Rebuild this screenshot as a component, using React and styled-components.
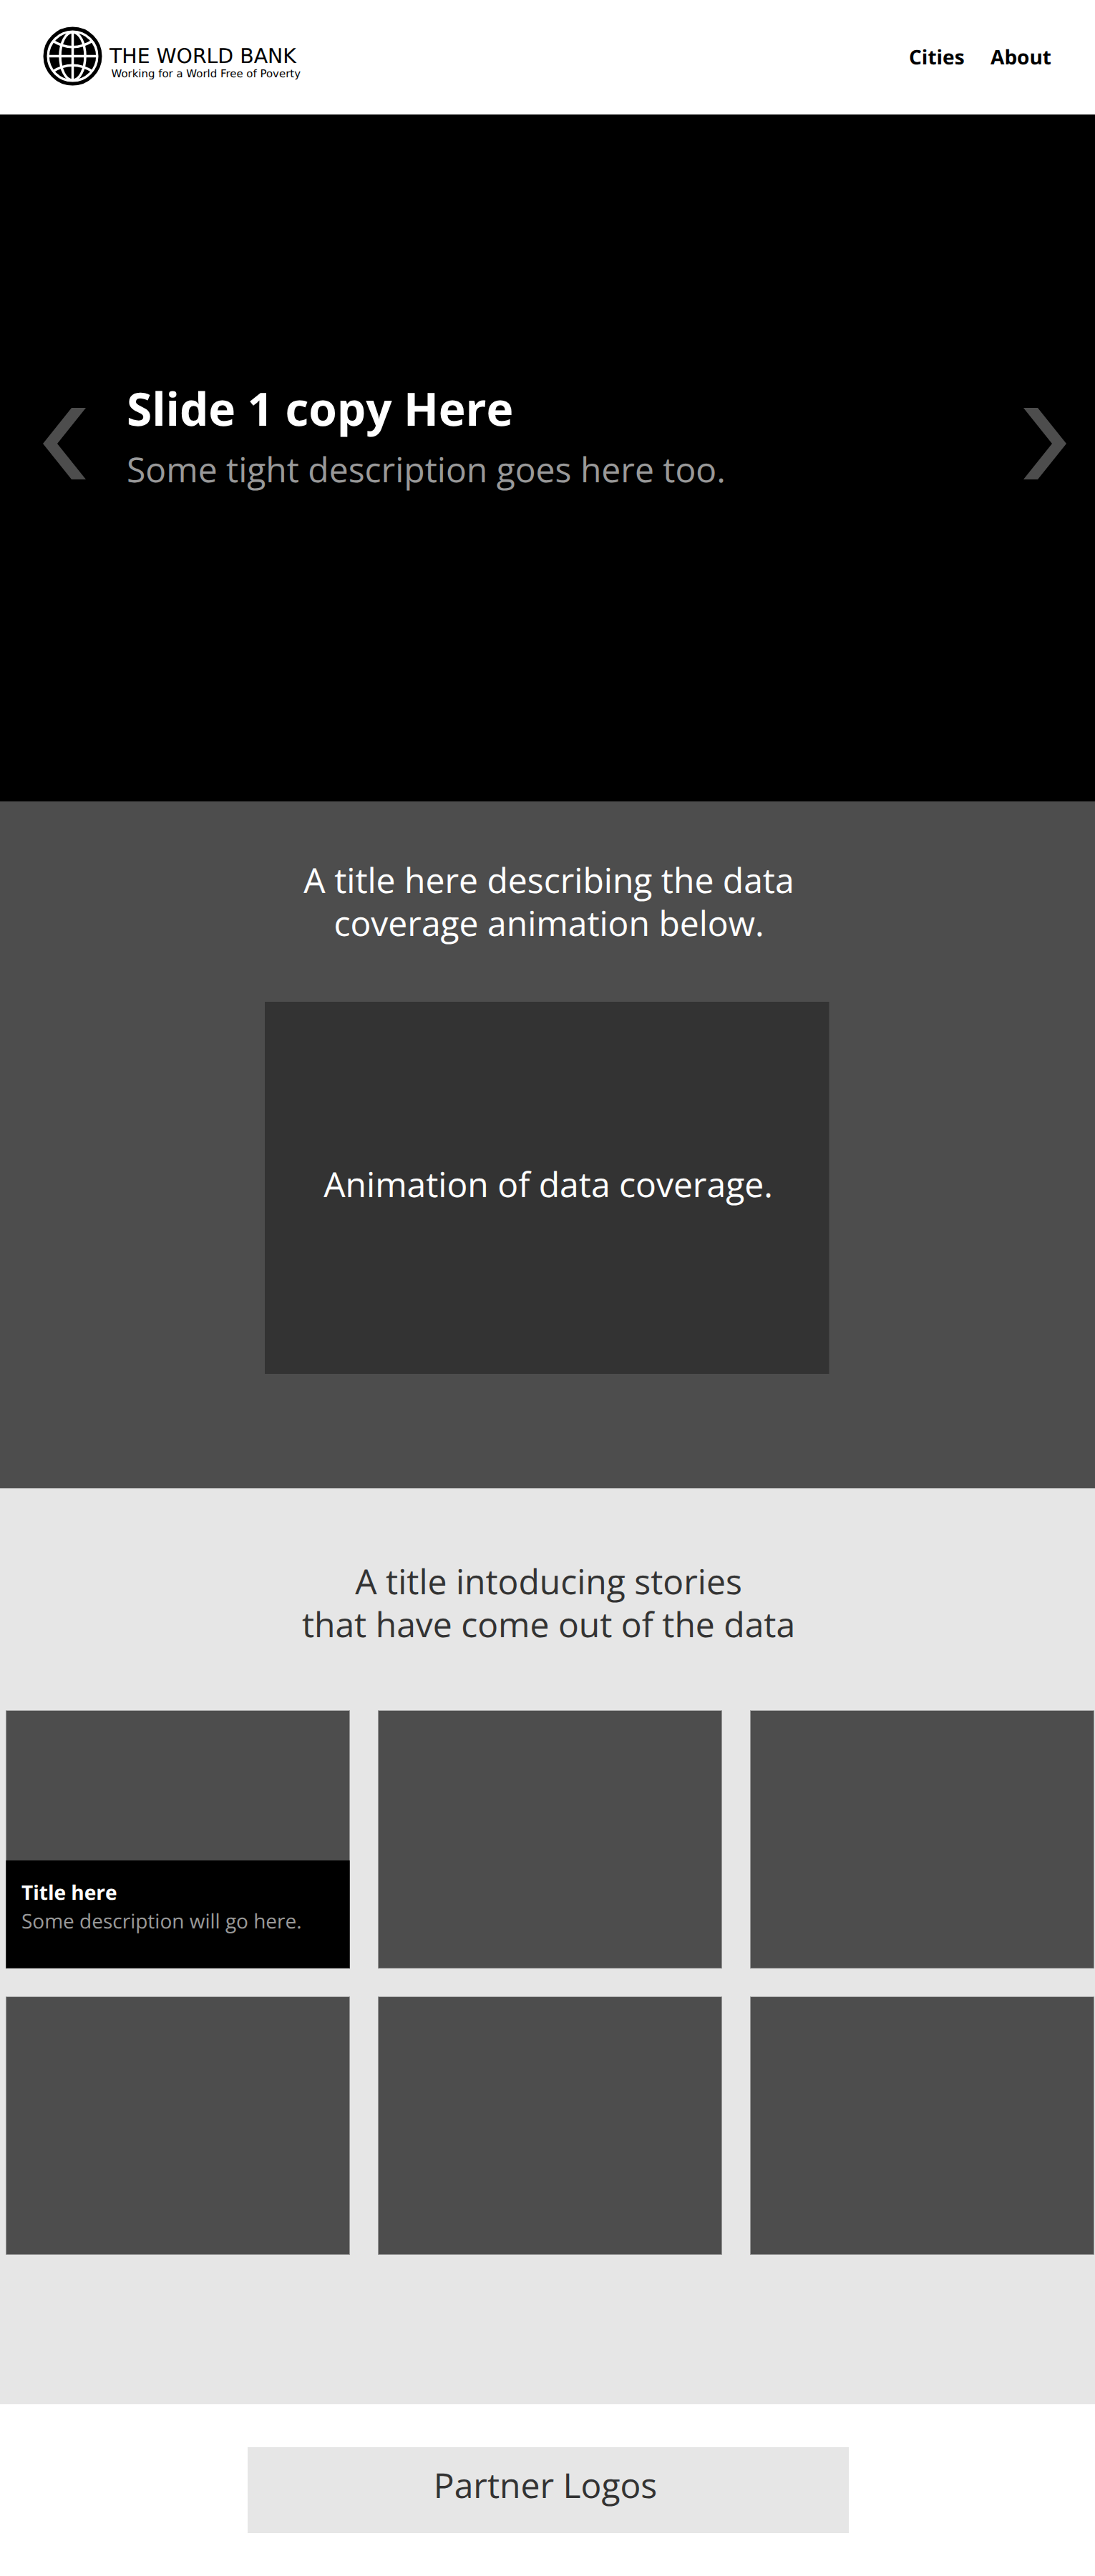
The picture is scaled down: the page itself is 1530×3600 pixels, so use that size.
import React from 'react';
import styled, { createGlobalStyle } from 'styled-components';

const GlobalStyle = createGlobalStyle`
  * { box-sizing: border-box; }
  body {
    margin: 0;
    background: #fff;
    font-family: 'Open Sans', sans-serif;
    color: #000;
    text-rendering: geometricPrecision;
  }
  h1, h2, h3, p { margin: 0; font-weight: 400; }
`;

const Header = styled.header`
  height: 160px;
  display: flex;
  justify-content: space-between;
  align-items: flex-start;
  padding: 37px 61px 0 60px;
`;
const Brand = styled.a`
  display: flex;
  align-items: flex-start;
`;
const BrandText = styled.div`
  display: flex;
  flex-direction: column;
  padding: 25px 0 0 10px;
  font-family: 'DejaVu Sans', sans-serif;
  white-space: nowrap;
`;
const BrandName = styled.span`
  font-size: 28.35px;
  line-height: 34px;
`;
const BrandTagline = styled.span`
  margin-top: -2px;
  padding-left: 2.5px;
  font-size: 14.95px;
  line-height: 18px;
`;
const Nav = styled.nav`
  display: flex;
  gap: 36.5px;
  padding-top: 23px;
`;
const NavLink = styled.a`
  font-size: 28px;
  line-height: 40px;
  font-weight: 700;
`;

const Hero = styled.section`
  height: 960px;
  display: flex;
  align-items: flex-start;
  background: #000;
  padding: 370px 40px 0 60px;
`;
const ArrowButton = styled.button`
  display: flex;
  margin: 40px 0 0;
  padding: 0;
  border: 0;
  background: none;
`;
const Slide = styled.div`
  flex: 1;
  padding: 1px 0 0 57px;
`;
const SlideTitle = styled.h1`
  font-size: 64px;
  line-height: 80px;
  font-weight: 700;
  letter-spacing: -0.12px;
  color: #fff;
`;
const SlideText = styled.p`
  margin-top: 16px;
  font-size: 48px;
  line-height: 60px;
  color: #999;
`;

const SectionTitle = styled.h2`
  font-size: 48px;
  line-height: 60px;
  text-align: center;
  color: ${(p) => p.$color};
`;
const Coverage = styled.section`
  height: 960px;
  display: flex;
  flex-direction: column;
  align-items: center;
  background: #4d4d4d;
  padding-top: 81px;

  > ${SectionTitle} { padding-left: 4px; }
`;
const Animation = styled.div`
  width: 789px;
  height: 520px;
  margin: 79px 1px 0 0;
  padding: 226px 0 0 4px;
  background: #333;
  border-right: 1px solid #404040;
`;

const Stories = styled.section`
  height: 1280px;
  background: #e6e6e6;
  padding: 101px 0 0 8px;

  > ${SectionTitle} { padding-right: 5px; }
`;
const CardGrid = styled.div`
  display: grid;
  grid-template-columns: repeat(3, 481px);
  gap: 39px;
  margin-top: 89px;
`;
const Card = styled.article`
  height: 361px;
  display: flex;
  flex-direction: column;
  justify-content: flex-end;
  background: #4d4d4d;
  border: 1px solid #999;
  border-top-color: #a8a8a8;
  border-bottom-color: #808080;
`;
const Caption = styled.div`
  height: 151px;
  margin: 0 -1px -1px;
  padding: 25px 21px 0;
  background: #000;
  border: 1px solid #333;
  border-top: 0;
`;
const CardTitle = styled.h3`
  font-size: 28px;
  line-height: 40px;
  font-weight: 700;
  color: #fff;
`;
const CardText = styled.p`
  font-size: 28px;
  line-height: 40px;
  color: #999;
`;

const Footer = styled.footer`
  height: 240px;
  display: flex;
  justify-content: center;
  padding-top: 60px;
`;
const Partners = styled.div`
  width: 840px;
  height: 120px;
  margin-left: 2px;
  padding: 24px 8px 0 0;
  background: #e6e6e6;
`;

function Globe() {
  return (
    <svg width="83" height="83" viewBox="-41.5 -41.5 83 83" fill="none">
      <circle r="38.5" stroke="#000" strokeWidth="5" />
      <circle r="32.7" fill="#000" />
      <g stroke="#fff" strokeWidth="3.5">
        <path d="M0-34V34M-34 0H34" />
        <ellipse rx="17.5" ry="33.5" />
        <path d="M-28-21.5Q0-4 28-21.5M-28 21.5Q0 4 28 21.5" />
      </g>
    </svg>
  );
}

function Arrow({ right }) {
  return (
    <svg width="60" height="100" viewBox="0 0 60 100">
      <path
        fill="#4d4d4d"
        d={right ? 'M0 0H20L60 50L20 100H0L40 50Z' : 'M60 0H40L0 50L40 100H60L20 50Z'}
      />
    </svg>
  );
}

const stories = [
  { id: 1, title: 'Title here', text: 'Some description will go here.' },
  { id: 2 }, { id: 3 }, { id: 4 }, { id: 5 }, { id: 6 },
];

export default function App() {
  return (
    <>
      <GlobalStyle />
      <Header>
        <Brand>
          <Globe />
          <BrandText>
            <BrandName>THE WORLD BANK</BrandName>
            <BrandTagline>Working for a World Free of Poverty</BrandTagline>
          </BrandText>
        </Brand>
        <Nav>
          <NavLink>Cities</NavLink>
          <NavLink>About</NavLink>
        </Nav>
      </Header>
      <Hero>
        <ArrowButton aria-label="Previous"><Arrow /></ArrowButton>
        <Slide>
          <SlideTitle>Slide 1 copy Here</SlideTitle>
          <SlideText>Some tight description goes here too.</SlideText>
        </Slide>
        <ArrowButton aria-label="Next"><Arrow right /></ArrowButton>
      </Hero>
      <Coverage>
        <SectionTitle $color="#fff">
          A title here describing the data<br />coverage animation below.
        </SectionTitle>
        <Animation>
          <SectionTitle as="p" $color="#fff">Animation of data coverage.</SectionTitle>
        </Animation>
      </Coverage>
      <Stories>
        <SectionTitle $color="#333">
          A title intoducing stories<br />that have come out of the data
        </SectionTitle>
        <CardGrid>
          {stories.map((s) => (
            <Card key={s.id}>
              {s.title && (
                <Caption>
                  <CardTitle>{s.title}</CardTitle>
                  <CardText>{s.text}</CardText>
                </Caption>
              )}
            </Card>
          ))}
        </CardGrid>
      </Stories>
      <Footer>
        <Partners>
          <SectionTitle $color="#333">Partner Logos</SectionTitle>
        </Partners>
      </Footer>
    </>
  );
}
